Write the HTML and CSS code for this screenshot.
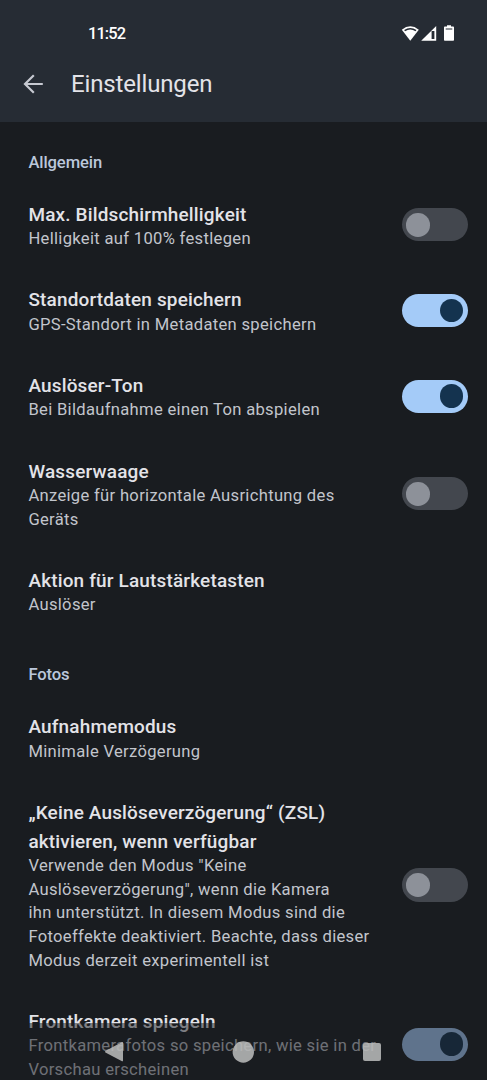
FILE: index.html
```
<!DOCTYPE html>
<html lang="de">
<head>
    <meta charset="UTF-8">
    <meta name="viewport" content="width=device-width, initial-scale=1.0">
    <title>Einstellungen</title>
    <link rel="stylesheet" href="styles.css">
</head>
<body>
    <header class="top-bar">
        <div class="status-bar">
            <span class="clock">11:52</span>
            <svg class="status-icons" width="54" height="18" viewBox="0 0 54 18" fill="#fff">
                <path d="M0.8 4.7 Q9.3 -2 17.8 4.7 L9.3 15.8 Z"/>
                <path d="M3.6 5.7 Q9.3 1.7 15 5.7" fill="none" stroke="#262c34" stroke-width="1.6"/>
                <path fill-rule="evenodd" d="M35.2 0.9 V15.8 H20.2 Z M30.6 6 V14 H33.4 V6 Z"/>
                <path fill-rule="evenodd" d="M46 0.2 h4 v1.4 h2.2 q0.8 0 0.8 0.8 v12.6 q0 0.8 -0.8 0.8 h-8.4 q-0.8 0 -0.8 -0.8 v-12.6 q0 -0.8 0.8 -0.8 h2.2 Z M44.7 3.4 V4.6 H51.3 V3.4 Z"/>
            </svg>
        </div>
        <div class="app-bar">
            <svg class="back" width="20" height="20" viewBox="0 0 20 20" fill="none" stroke="#c6c9d1" stroke-width="2.2">
                <path d="M19.8 10 H2.4 M10.8 1.2 L2 10 L10.8 18.8"/>
            </svg>
            <h1>Einstellungen</h1>
        </div>
    </header>

    <main>
        <h2>Allgemein</h2>
        <div class="setting">
            <div class="text">
                <h3>Max. Bildschirmhelligkeit</h3>
                <p>Helligkeit auf 100% festlegen</p>
            </div>
            <div class="switch"></div>
        </div>
        <div class="setting">
            <div class="text">
                <h3>Standortdaten speichern</h3>
                <p>GPS-Standort in Metadaten speichern</p>
            </div>
            <div class="switch on"></div>
        </div>
        <div class="setting">
            <div class="text">
                <h3>Auslöser-Ton</h3>
                <p>Bei Bildaufnahme einen Ton abspielen</p>
            </div>
            <div class="switch on"></div>
        </div>
        <div class="setting">
            <div class="text">
                <h3>Wasserwaage</h3>
                <p>Anzeige für horizontale Ausrichtung des<br>Geräts</p>
            </div>
            <div class="switch"></div>
        </div>
        <div class="setting">
            <div class="text">
                <h3>Aktion für Lautstärketasten</h3>
                <p>Auslöser</p>
            </div>
        </div>

        <h2>Fotos</h2>
        <div class="setting">
            <div class="text">
                <h3>Aufnahmemodus</h3>
                <p>Minimale Verzögerung</p>
            </div>
        </div>
        <div class="setting">
            <div class="text">
                <h3>„Keine Auslöseverzögerung“ (ZSL)<br>aktivieren, wenn verfügbar</h3>
                <p>Verwende den Modus "Keine<br>Auslöseverzögerung", wenn die Kamera<br>ihn unterstützt. In diesem Modus sind die<br>Fotoeffekte deaktiviert. Beachte, dass dieser<br>Modus derzeit experimentell ist</p>
            </div>
            <div class="switch"></div>
        </div>
        <div class="setting">
            <div class="text">
                <h3>Frontkamera spiegeln</h3>
                <p>Frontkamerafotos so speichern, wie sie in der<br>Vorschau erscheinen</p>
            </div>
            <div class="switch on"></div>
        </div>
    </main>

    <nav class="nav-bar">
        <svg width="20" height="22" viewBox="0 0 20 22"><path d="M17.6 1.3 Q19 0.6 19 2 V19.4 Q19 20.8 17.6 20.1 L1.4 11.5 Q0.6 10.7 1.4 9.9 Z"/></svg>
        <svg width="22" height="22" viewBox="0 0 22 22"><circle cx="11.3" cy="11" r="10.7"/></svg>
        <svg width="20" height="20" viewBox="0 0 20 20"><rect x="1" y="1" width="18" height="18" rx="2"/></svg>
    </nav>
</body>
</html>
```
FILE: styles.css
```
:root {
    --background: #191c20;
    --bar: #262c34;
    --text-primary: #e3e3e8;
    --text-secondary: #c2c5cc;
    --section: #bbc7db;
    --primary: #a4cbf8;
    --on-primary: #14334f;
    --track: #43474e;
    --thumb: #8d9199;
}

* {
    margin: 0;
    padding: 0;
    box-sizing: border-box;
}

body {
    font-family: Roboto, sans-serif;
    background-color: var(--background);
    color: var(--text-primary);
    height: 100vh;
    overflow: hidden;
}

.top-bar {
    height: 121.5px;
    background: var(--bar);
}

.status-bar {
    display: flex;
    justify-content: space-between;
    align-items: center;
    height: 52px;
    padding: 16px 32px 0 88px;
}

.clock {
    padding-bottom: 1px;
    font-size: 16.4px;
    font-weight: 500;
    letter-spacing: -0.9px;
    color: #fff;
}

.app-bar {
    display: flex;
    align-items: center;
    gap: 28px;
    height: 64px;
    padding-left: 23px;
}

h1 {
    font-size: 24px;
    font-weight: 400;
    line-height: 32px;
    letter-spacing: -0.15px;
}

h2 {
    height: 60.5px;
    padding: 29px 28.4px 0;
    font-size: 16.6px;
    font-weight: 500;
    line-height: 23.7px;
    letter-spacing: -0.1px;
    color: var(--section);
}

.setting {
    display: flex;
    align-items: center;
    justify-content: space-between;
    padding: 17.8px 19px 17.8px 28.4px;
}

h3 {
    font-size: 18.95px;
    font-weight: 500;
    line-height: 28.4px;
    letter-spacing: 0.18px;
    margin-bottom: -2.2px;
}

p {
    font-size: 16.6px;
    line-height: 23.7px;
    letter-spacing: 0.31px;
    color: var(--text-secondary);
}

.text {
    padding-top: 0.9px;
    margin-bottom: -0.7px;
    white-space: nowrap;
}

.switch {
    flex: none;
    display: flex;
    align-items: center;
    width: 66.3px;
    height: 33.2px;
    padding: 0 4.7px;
    border-radius: 17px;
    background: var(--track);
}

.switch::before {
    content: "";
    width: 23.7px;
    height: 23.7px;
    border-radius: 50%;
    background: var(--thumb);
}

.switch.on {
    justify-content: flex-end;
    background: var(--primary);
}

.switch.on::before {
    background: var(--on-primary);
}

/* translucent system navigation over the list */
.nav-bar {
    position: fixed;
    left: 0;
    right: 0;
    bottom: 0;
    height: 57px;
    display: flex;
    justify-content: space-between;
    align-items: center;
    padding: 0 105px 0 104px;
    background: rgba(25, 28, 32, 0.5);
}

.nav-bar svg {
    fill: rgba(190, 190, 190, 0.85);
}
```
